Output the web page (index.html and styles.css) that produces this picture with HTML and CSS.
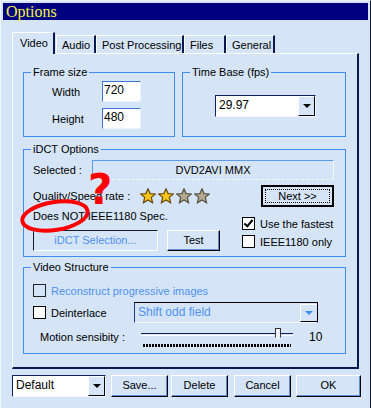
FILE: index.html
```html
<!DOCTYPE html>
<html>
<head>
  <title>Options</title>
  <link rel="stylesheet" href="styles.css">
</head>
<body>
  <div class="window">
    <div class="titlebar">Options</div>

    <div class="tabs">
      <div class="tab active" style="width:43px">Video</div>
      <div class="tab" style="width:40px">Audio</div>
      <div class="tab" style="width:88px">Post Processing</div>
      <div class="tab" style="width:42px">Files</div>
      <div class="tab" style="width:49px">General</div>
    </div>

    <div class="panel">
      <div class="top-row">
        <div class="group frame">
          <span class="group-title">Frame size</span>
          <div class="size-grid">
            <label>Width</label>
            <div class="edit">720</div>
            <label>Height</label>
            <div class="edit">480</div>
          </div>
        </div>
        <div class="group timebase">
          <span class="group-title">Time Base (fps)</span>
          <div class="combo fps">
            <div class="combo-text">29.97</div>
            <div class="combo-btn"><span class="arrow"></span></div>
          </div>
        </div>
      </div>

      <div class="group idct">
        <span class="group-title">iDCT Options</span>
        <div class="selected-row">
          <span class="selected-label">Selected :</span>
          <div class="selected-box">DVD2AVI MMX</div>
        </div>
        <div class="idct-body">
          <div class="idct-left">
            <div class="quality-row">
              <span class="quality-label">Quality/Speed rate :</span>
              <svg class="star" viewBox="0 0 16 16"><polygon class="gold" points="8,0.8 10.1,5.6 15.3,6 11.3,9.4 12.6,14.8 8,12 3.4,14.8 4.7,9.4 0.7,6 5.9,5.6"/></svg>
              <svg class="star" viewBox="0 0 16 16"><polygon class="gold" points="8,0.8 10.1,5.6 15.3,6 11.3,9.4 12.6,14.8 8,12 3.4,14.8 4.7,9.4 0.7,6 5.9,5.6"/></svg>
              <svg class="star" viewBox="0 0 16 16"><polygon class="grey" points="8,0.8 10.1,5.6 15.3,6 11.3,9.4 12.6,14.8 8,12 3.4,14.8 4.7,9.4 0.7,6 5.9,5.6"/></svg>
              <svg class="star" viewBox="0 0 16 16"><polygon class="grey" points="8,0.8 10.1,5.6 15.3,6 11.3,9.4 12.6,14.8 8,12 3.4,14.8 4.7,9.4 0.7,6 5.9,5.6"/></svg>
            </div>
            <div class="spec-line">Does NOT IEEE1180 Spec.</div>
            <div class="button-row">
              <div class="btn disabled idct-sel">iDCT Selection...</div>
              <div class="btn test">Test</div>
            </div>
          </div>
          <div class="idct-right">
            <div class="btn default next"><span class="focus">Next &gt;&gt;</span></div>
            <div class="check-row first"><span class="check checked"></span>Use the fastest</div>
            <div class="check-row second"><span class="check"></span>IEEE1180 only</div>
          </div>
        </div>
      </div>

      <div class="group vstruct">
        <span class="group-title">Video Structure</span>
        <div class="check-row recon"><span class="check off"></span><span class="blue">Reconstruct progressive images</span></div>
        <div class="deint-row">
          <div class="check-row deint"><span class="check"></span>Deinterlace</div>
          <div class="combo shift">
            <div class="combo-text blue">Shift odd field</div>
            <div class="combo-btn"><span class="arrow blue-arrow"></span></div>
          </div>
        </div>
        <div class="motion-row">
          <span class="motion-label">Motion sensibity :</span>
          <div class="slider">
            <div class="track"></div>
            <div class="thumb"></div>
            <div class="ticks"></div>
          </div>
          <span class="motion-value">10</span>
        </div>
      </div>
    </div>

    <div class="footer">
      <div class="combo preset">
        <div class="combo-text">Default</div>
        <div class="combo-btn"><span class="arrow"></span></div>
      </div>
      <div class="btn foot save">Save...</div>
      <div class="btn foot delete">Delete</div>
      <div class="btn foot cancel">Cancel</div>
      <div class="btn foot ok">OK</div>
    </div>

    <svg class="ring" width="76" height="40" viewBox="0 0 76 40">
      <ellipse cx="37" cy="19" rx="33" ry="14" transform="rotate(-9 37 19)"/>
    </svg>
    <span class="qmark">?</span>
  </div>
</body>
</html>
```

FILE: styles.css
```css
body {
  margin: 0;
  background-color: #d5e4f7;
  font-family: "Liberation Sans", Arial, sans-serif;
  font-size: 11px;
  color: #000;
}

.window {
  position: relative;
  width: 371px;
  height: 408px;
  box-sizing: border-box;
  padding: 2px 2px 0 2px;
  background-color: #d5e4f7;
  border-top: 1px solid #eef4fd;
  border-left: 1px solid #eef4fd;
  border-right: 1px solid #101830;
  overflow: hidden;
}

.titlebar {
  height: 17px;
  line-height: 17px;
  padding-left: 3px;
  background-color: #000080;
  color: #f4f44a;
  font-family: "Liberation Serif", "Times New Roman", serif;
  font-size: 16px;
}

/* tabs */
.tabs {
  display: flex;
  align-items: flex-end;
  height: 21px;
  margin: 12px 0 0 9px;
}

.tab {
  height: 18px;
  line-height: 18px;
  box-sizing: border-box;
  padding-left: 5px;
  border-top: 1px solid #fff;
  border-left: 1px solid #fff;
  border-right: 2px solid #0a1a50;
  white-space: nowrap;
}

.tab.active {
  line-height: 20px;
  padding-left: 7px;
  margin-right: 1px;
  position: relative;
  z-index: 1;
  background-color: #d5e4f7;
  margin-bottom: -1px;
  height: 22px;
}

/* panel */
.panel {
  width: 347px;
  height: 316px;
  box-sizing: border-box;
  margin-left: 9px;
  padding: 18px 0 0 10px;
  border-top: 1px solid #fff;
  border-left: 1px solid #fff;
  border-right: 2px solid #0a1a50;
  border-bottom: 2px solid #0a1a50;
}

.top-row {
  display: flex;
  gap: 7px;
}

.group {
  position: relative;
  box-sizing: border-box;
  border: 1px solid #3f8cf0;
}

.group-title {
  position: absolute;
  top: -8px;
  left: 7px;
  padding: 0 2px;
  line-height: 14px;
  background-color: #d5e4f7;
  white-space: nowrap;
}

.frame {
  width: 152px;
  height: 65px;
}

.size-grid {
  display: grid;
  grid-template-columns: 50px 39px;
  grid-auto-rows: 21px;
  row-gap: 6px;
  padding: 8px 0 0 28px;
  align-items: center;
}

.edit {
  height: 21px;
  box-sizing: border-box;
  padding: 1px 0 0 1px;
  line-height: 15px;
  font-size: 12px;
  background-color: #fff;
  border-top: 1px solid #3a76d6;
  border-left: 1px solid #3a76d6;
  border-right: 1px solid #eaf2fc;
  border-bottom: 1px solid #eaf2fc;
}

.timebase {
  width: 164px;
  height: 65px;
  padding: 22px 0 0 32px;
}

/* combo boxes */
.combo {
  display: flex;
  box-sizing: border-box;
  height: 21px;
  background-color: #fff;
  border-top: 1px solid #10205a;
  border-left: 1px solid #10205a;
  border-right: 1px solid #f4f8fe;
  border-bottom: 1px solid #f4f8fe;
}

.combo-text {
  flex: 1;
  padding-left: 3px;
  line-height: 19px;
  font-size: 12px;
}

.combo-btn {
  width: 17px;
  display: flex;
  align-items: center;
  justify-content: center;
  box-sizing: border-box;
  background-color: #d5e4f7;
  border-top: 1px solid #fff;
  border-left: 1px solid #fff;
  border-right: 1px solid #000;
  border-bottom: 1px solid #000;
}

.arrow {
  width: 0;
  height: 0;
  border-left: 4px solid transparent;
  border-right: 4px solid transparent;
  border-top: 4px solid #000;
}

.fps {
  width: 101px;
  height: 22px;
}

/* iDCT options */
.idct {
  width: 323px;
  height: 108px;
  margin-top: 12px;
  padding: 10px 0 0 9px;
}

.selected-row {
  display: flex;
  align-items: center;
}

.selected-label {
  width: 59px;
}

.selected-box {
  width: 242px;
  height: 20px;
  box-sizing: border-box;
  line-height: 18px;
  text-align: center;
  border-top: 1px solid #5a9cf2;
  border-left: 1px solid #5a9cf2;
  border-right: 1px solid #f4f8fe;
  border-bottom: 1px dashed #f4f8fe;
}

.idct-body {
  display: flex;
}

.idct-left {
  width: 209px;
}

.quality-row {
  display: flex;
  align-items: center;
  height: 22px;
  margin-top: 5px;
}

.quality-label {
  width: 107px;
  white-space: nowrap;
}

.star {
  width: 16px;
  height: 16px;
  margin-right: 2px;
}

.star .gold {
  fill: #f6c61c;
  stroke: #6a4a10;
  stroke-width: 1.2;
}

.star .grey {
  fill: #b3aa92;
  stroke: #5a5242;
  stroke-width: 1.2;
}

.spec-line {
  height: 16px;
  line-height: 16px;
  margin-top: 1px;
}

.button-row {
  display: flex;
  margin-top: 6px;
  gap: 9px;
}

.btn {
  box-sizing: border-box;
  height: 21px;
  line-height: 18px;
  text-align: center;
  background-color: #d5e4f7;
  border-top: 1px solid #fff;
  border-left: 1px solid #fff;
  border-right: 1px solid #000;
  border-bottom: 1px solid #000;
  box-shadow: inset -1px -1px #5d8fd8;
  white-space: nowrap;
}

.btn.disabled {
  color: #4f92f2;
}

.idct-sel {
  width: 125px;
  border-top-color: #1a1a2a;
  border-left-color: #1a1a2a;
  border-right-color: #fff;
  border-bottom-color: #fff;
  box-shadow: none;
}

.test {
  width: 53px;
}

.idct-right {
  width: 100px;
}

.next {
  width: 73px;
  height: 22px;
  margin: 5px 0 0 19px;
  border: 2px solid #000;
  box-shadow: none;
  padding: 2px;
  line-height: 12px;
}

.focus {
  display: block;
  height: 12px;
  border: 1px dotted #000;
}

.check-row {
  display: flex;
  align-items: center;
  height: 13px;
  white-space: nowrap;
}

.check {
  width: 13px;
  height: 13px;
  box-sizing: border-box;
  margin-right: 5px;
  background-color: #fff;
  border: 1px solid #000;
  position: relative;
  flex: none;
}

.check.checked::after {
  content: "";
  position: absolute;
  left: 3px;
  top: 0;
  width: 3px;
  height: 7px;
  border-right: 2px solid #000;
  border-bottom: 2px solid #000;
  transform: rotate(40deg);
}

.check.off {
  background-color: #d5e4f7;
  border-color: #222;
}

.check-row.first {
  margin-top: 10px;
}

.check-row.second {
  margin-top: 5px;
}

/* video structure */
.vstruct {
  width: 323px;
  height: 87px;
  margin-top: 10px;
  padding: 16px 0 0 9px;
}

.blue {
  color: #4f92f2;
}

.deint-row {
  display: flex;
  align-items: center;
  height: 21px;
  margin-top: 5px;
}

.deint {
  width: 101px;
}

.shift {
  width: 184px;
  border-top: 1px solid #000;
  border-left: 1px solid #1a3a8a;
  border-right: 1px solid #000;
  border-bottom: 1px solid #f4f8fe;
  background-color: #d5e4f7;
}

.shift .combo-btn {
  border-right: none;
  height: 18px;
  margin-top: 1px;
}

.blue-arrow {
  border-top-color: #3f8cf0;
}

.motion-row {
  display: flex;
  align-items: center;
  height: 20px;
  margin-top: 4px;
  padding-left: 7px;
}

.motion-label {
  width: 101px;
  white-space: nowrap;
}

.slider {
  position: relative;
  width: 152px;
  height: 20px;
}

.track {
  margin-top: 6px;
  height: 1px;
  border-top: 1px solid #10205a;
  border-bottom: 1px solid #fff;
}

.thumb {
  position: absolute;
  left: 134px;
  top: 1px;
  width: 4px;
  height: 11px;
  background-color: #f2f6fc;
  border: 1px solid #333;
  border-bottom-width: 0;
  clip-path: polygon(0 0, 100% 0, 100% 75%, 50% 100%, 0 75%);
}

.ticks {
  margin: 8px 0 0 2px;
  width: 148px;
  height: 3px;
  background: repeating-linear-gradient(90deg, #000 0 2px, transparent 2px 3px);
}

.motion-value {
  margin-left: 16px;
  font-size: 12px;
}

/* footer */
.footer {
  display: flex;
  margin: 6px 0 0 9px;
}

.preset {
  width: 94px;
  height: 22px;
}

.foot {
  width: 57px;
  height: 22px;
  line-height: 19px;
}

.save {
  margin-left: 5px;
}

.delete {
  margin-left: 3px;
}

.cancel {
  margin-left: 6px;
}

.ok {
  width: 65px;
  margin-left: 5px;
}

/* red annotations drawn over the dialog */
.ring {
  position: absolute;
  left: 17px;
  top: 196px;
}

.ring ellipse {
  fill: none;
  stroke: #f00;
  stroke-width: 4;
}

.qmark {
  position: absolute;
  left: 87px;
  top: 167px;
  color: #f00;
  font-family: "DejaVu Sans", sans-serif;
  font-weight: bold;
  font-size: 42px;
  line-height: 44px;
}
```
